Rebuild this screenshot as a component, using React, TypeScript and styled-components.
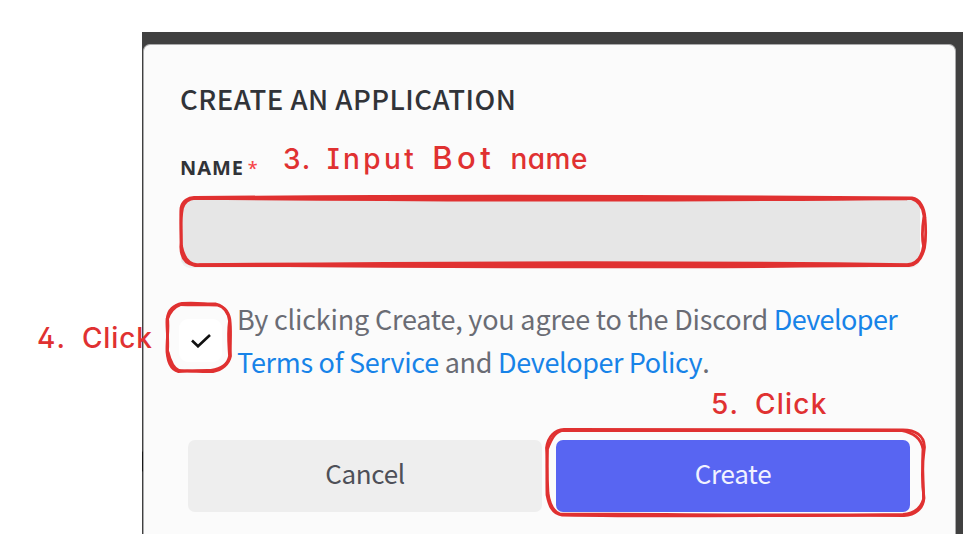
import React from "react";
import styled, { createGlobalStyle } from "styled-components";

const GlobalStyle = createGlobalStyle`
  * { box-sizing: border-box; }
  body { margin: 0; background: #fff; overflow: hidden; }
`;

const Page = styled.main`
  position: relative;
  width: 980px;
  height: 542px;
  padding: 32px 17px 8px 142px;
  background: #fff;
  font-family: "Noto Sans CJK SC", "Noto Sans", sans-serif;
`;

const Backdrop = styled.div`
  height: 502px;
  padding: 12px 7px 0 1px;
  background: #404040;
  overflow: hidden;
`;

const Dialog = styled.section`
  height: 490px;
  padding: 37px 34px 0 36px;
  background: #fbfbfb;
  border: 1px solid #a9a9aa;
  border-bottom: 0;
  border-radius: 7px 7px 0 0;
`;

const Title = styled.h1`
  margin: 0;
  height: 32px;
  font-size: 27.5px;
  line-height: 32px;
  font-weight: 500;
  letter-spacing: 0.48px;
  white-space: nowrap;
  color: #313338;
`;

const Label = styled.label`
  display: flex;
  gap: 4px;
  margin-top: 42px;
  height: 24px;
  font-family: "Noto Sans", sans-serif;
  font-size: 20px;
  line-height: 24px;
  font-weight: 700;
  letter-spacing: 0.9px;
  color: #313338;
`;

const Required = styled.span`
  color: #f6474b;
  font-size: 18px;
  font-weight: 500;
`;

const NameInput = styled.input`
  display: block;
  width: 739px;
  height: 69px;
  margin: 19px 0 0 1px;
  padding: 0 16px;
  border: 0;
  border-bottom: 3px solid #f1f1f1;
  border-radius: 9px;
  background: #e6e6e6;
  font: inherit;
  font-size: 26px;
`;

const Agreement = styled.div`
  display: flex;
  margin-top: 29px;
`;

const Checkbox = styled.span`
  display: grid;
  place-items: center;
  width: 43px;
  height: 43px;
  margin: 22px 15px 0 -1px;
  border-radius: 9px;
  background: #fff;
`;

const Terms = styled.p`
  margin: 0;
  font-size: 27px;
  line-height: 43px;
  white-space: nowrap;
  color: #6a6c74;
`;

const TermsLine = styled.span<{ $spacing: number }>`
  display: block;
  letter-spacing: ${(p) => p.$spacing}px;
`;

const Link = styled.a<{ $spacing?: number }>`
  color: #1783e8;
  letter-spacing: ${(p) => (p.$spacing === undefined ? "inherit" : `${p.$spacing}px`)};
`;

const Actions = styled.div`
  display: flex;
  gap: 14px;
  margin: 57px 0 0 8px;
`;

const Button = styled.button<{ $primary?: boolean }>`
  width: 354px;
  height: 72px;
  padding: 0 0 6px;
  border: 0;
  border-radius: 7px;
  font: inherit;
  font-size: 26px;
  line-height: 36px;
  letter-spacing: -0.3px;
  color: ${(p) => (p.$primary ? "#f1f2ff" : "#4e5058")};
  background: ${(p) => (p.$primary ? "#5865f2" : "#eeeeee")};
`;

const Note = styled.div<{ $x: number; $y: number; $gap: number }>`
  position: absolute;
  left: ${(p) => p.$x}px;
  top: ${(p) => p.$y}px;
  display: flex;
  align-items: baseline;
  gap: ${(p) => p.$gap}px;
  font-family: Inter, sans-serif;
  font-size: 28px;
  line-height: 34px;
  font-weight: 500;
  font-feature-settings: "cv11", "cv08", "cv02";
  color: #e03131;
  white-space: nowrap;
`;

const Word = styled.span<{ $spacing?: number; $size?: number }>`
  font-size: ${(p) => p.$size ?? 28}px;
  letter-spacing: ${(p) => p.$spacing ?? 0}px;
`;

const Sketch = styled.svg`
  position: absolute;
  inset: 0;
  pointer-events: none;
`;

export default function App() {
  return (
    <Page>
      <GlobalStyle />
      <Backdrop>
        <Dialog>
          <Title>CREATE AN APPLICATION</Title>
          <Label htmlFor="app-name">
            NAME <Required>*</Required>
          </Label>
          <NameInput id="app-name" />
          <Agreement>
            <Checkbox role="checkbox" aria-checked="true">
              <svg width="20" height="14" viewBox="0 0 20 14" fill="none" stroke="#111" strokeWidth="2.6">
                <path d="M1 6.5 7 12.3 19 1" />
              </svg>
            </Checkbox>
            <Terms>
              <TermsLine $spacing={-0.19}>
                By clicking Create, you agree to the Discord <Link $spacing={-0.6}>Developer</Link>
              </TermsLine>
              <TermsLine $spacing={-0.28}>
                <Link>Terms of Service</Link> and <Link $spacing={-0.4}>Developer Policy</Link>.
              </TermsLine>
            </Terms>
          </Agreement>
          <Actions>
            <Button type="button">Cancel</Button>
            <Button type="button" $primary>Create</Button>
          </Actions>
        </Dialog>
      </Backdrop>

      <Sketch width="980" height="542" viewBox="0 0 980 542" fill="none" stroke="#e03131" strokeLinecap="round" strokeLinejoin="round">
        <path stroke="#181818" d="M142.5 452V471" strokeWidth="1" />
        <g strokeWidth="2.8">
          <path d="M196 197.5C360 196 620 195.5 912 198C920 199 924.5 208 925 218C926 229 926 239 924.5 248C922 258 917 265 909 265.5C650 264 420 266.8 195 265.5C185 264 181 257 180.8 247C182 231 180 219 181 208C182 202 188 196.5 196 197.5Z" />
          <path d="M195 198.3C430 200.5 680 201 911 198.5C919 201 923 207 924 216C922 229 922 239 923.5 246C922 257 916 264 907 264.7C710 262 480 262 197 264.7C187 264 183 254 181.5 246C180.5 229 181 216 182.5 208C184 203 187 199 195 198.3Z" />
          <path d="M205 198.5C430 197 680 197.5 907 198.8M200 265C420 267 650 268.5 907 265.2" />
        </g>
        <g strokeWidth="2.8">
          <path d="M182 303.5C195 302.5 205 304 216 304C225 306 230 314 230.2 323C231.2 335 229.8 346 230.5 356C229 364 222 370 213 371.5C199 372 188 370 178 371.5C170 369 168 361 167 352C166.5 340 169 329 167.5 318C168 310 174 305 182 303.5Z" />
          <path d="M180 304.5C195 305.5 205 304.5 217 305C225 307 228.5 314 229.5 321C227.5 335 229 346 229.5 356C228 365 220 369 211 370.5C199 370 186 372 176 370C170 366 168 359 167.5 351C168.5 339 166.5 329 167 319C169 312 173 306 180 304.5Z" />
          <path d="M167.5 319C170 312 174 307 181 304.5M168 352C170 360 173 368 179 370.5" />
        </g>
        <g strokeWidth="2.8">
          <path d="M564 429.5C680 430 790 429 903 430C915 430 924 435 924.5 447C922 464 921.5 480 924 498C923 509 915 515 904 515.5C790 515 675 517 562 515C552 514 549 505 547 495C546.5 479 547.5 462 546.5 448C548 436 555 430 564 429.5Z" />
          <path d="M562 430.5C680 431.5 790 430.5 901 430.5C914 433 921 438 923 449C922 466 923.5 481 923.5 499C921 508 914 513.5 903 514.5C790 516 675 514 560 514C552 511 549 501 548 493C547 478 547 463 547.5 449C551 440 554 433 562 430.5Z" />
        </g>
      </Sketch>

      <Note $x={283} $y={141} $gap={15}>
        <Word $spacing={1.8}>3.</Word>
        <Word $spacing={3.4}>Input</Word>
        <Word $spacing={4.5} $size={31}>Bot</Word>
        <Word $spacing={0.5}>name</Word>
      </Note>
      <Note $x={37} $y={321} $gap={15}>
        <Word $spacing={2}>4.</Word>
        <Word $spacing={0.9}>Click</Word>
      </Note>
      <Note $x={711} $y={387} $gap={15}>
        <Word $spacing={2}>5.</Word>
        <Word $spacing={1.2}>Click</Word>
      </Note>
    </Page>
  );
}
